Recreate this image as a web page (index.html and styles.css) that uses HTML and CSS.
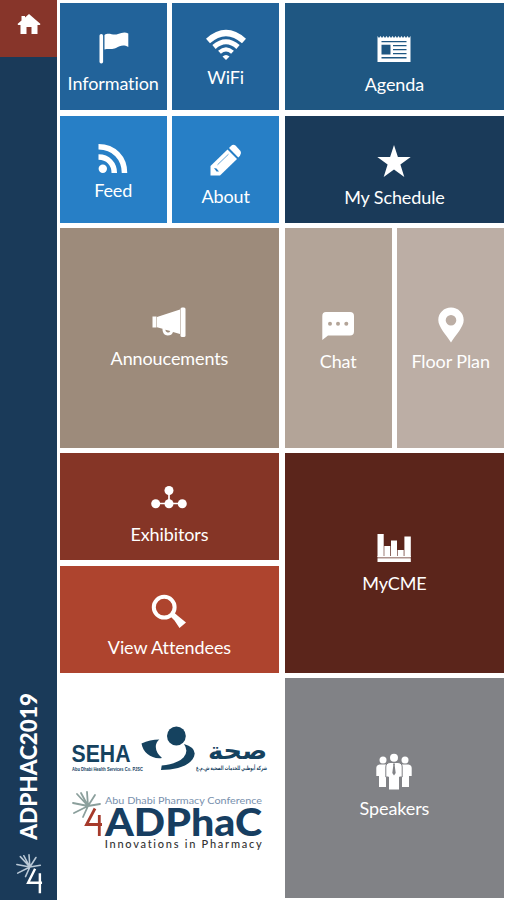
FILE: index.html
```html
<!DOCTYPE html>
<html lang="en">
<head>
    <meta charset="UTF-8">
    <meta name="viewport" content="width=device-width, initial-scale=1.0">
    <title>ADPHAC2019</title>
    <link rel="stylesheet" href="styles.css">
</head>
<body>
    <div class="app">
        <nav class="sidebar">
            <a class="home" href="#" aria-label="Home">
                <svg width="24" height="22" viewBox="0 0 24 22"><path d="M12 1 L23.5 11 L22.8 12 H20.5 V21 H14.5 V14 H9.5 V21 H3.5 V12 H1.2 L.5 11 L4.5 7.5 V3 H8 V4.5 Z"/></svg>
            </a>
            <div class="event-name">ADPHAC2019</div>
            <svg class="event-mark" width="28" height="40" viewBox="11 6 32 46">
                <path class="leaf" d="M28 21 L17 9 M28 21 L27 7 M28 21 L35 10 M28 21 L40 19 M28 21 L13 18 M28 21 L14 28 M28 21 L23 32 M28 21 L21 8"/>
                <path class="four" d="M34 23 L26 39 H42 M39.5 28 V51"/>
            </svg>
        </nav>

        <main class="tiles">
            <a class="tile information" href="#">
                <svg width="44" height="52" viewBox="0 0 44 52">
                    <rect x="8.5" y="14" width="3.6" height="29.5" rx="1.7"/>
                    <path d="M13.5 15 C18 12 22 16 27 14 C31 12.5 34 11.5 37.3 13.5 V27 C32 24 29 26 25 28 C20 30 18 28 13.5 29.5 Z"/>
                </svg>
                <span>Information</span>
            </a>
            <a class="tile wifi" href="#">
                <svg width="44" height="41" viewBox="0 0 44 41">
                    <g class="line">
                        <path d="M4 16 Q22 0 40 16" stroke-width="6"/>
                        <path d="M10 22 Q22 11.5 34 22" stroke-width="5"/>
                        <path d="M15.5 27.3 Q22 21.5 28.5 27.3" stroke-width="4.2"/>
                    </g>
                    <path d="M18.5 31.5 Q22 28.5 25.5 31.5 L22 35 Z"/>
                </svg>
                <span>WiFi</span>
            </a>
            <a class="tile agenda" href="#">
                <svg width="44" height="55" viewBox="0 0 44 55">
                    <path d="M5.5 18 L7 20 L8.5 18 L10 20 L11.5 18 L13 20 L14.5 18 L16 20 L17.5 18 L19 20 L20.5 18 L22 20 L23.5 18 L25 20 L26.5 18 L28 20 L29.5 18 L31 20 L32.5 18 L34 20 L35.5 18 L37 20 L38.5 18 V44 H5.5 Z"/>
                    <path class="cut" d="M9.5 23 H34.5 V24.3 H9.5 Z M9.5 26.8 H18.5 V36.5 H9.5 Z M21 27 H34.5 V28.3 H21 Z M21 31 H34.5 V32.3 H21 Z M21 35 H34.5 V36.3 H21 Z M9.5 39 H34.5 V40.5 H9.5 Z"/>
                </svg>
                <span>Agenda</span>
            </a>
            <a class="tile feed" href="#">
                <svg width="44" height="41" viewBox="0 0 44 41">
                    <circle cx="11.8" cy="30.7" r="4.2"/>
                    <g class="line">
                        <path d="M7.5 19 C17 19 23.3 26 23.3 35" stroke-width="5.5"/>
                        <path d="M7.5 8.7 C23 8.7 33.5 20 33.5 35" stroke-width="5.5"/>
                    </g>
                </svg>
                <span>Feed</span>
            </a>
            <a class="tile about" href="#">
                <svg width="44" height="53" viewBox="0 0 44 53">
                    <path d="M6.5 34 L23.5 17.5 L33 27 L16 43.5 H6.5 Z"/>
                    <path d="M25 16 L27 14 Q29 12 31.5 13.5 L36.5 19 Q38 21.5 36 23.7 L34.3 25.5 Z"/>
                    <path class="cut" d="M10 36 L12.5 36.5 L15 39.5 L12.5 39.5 Z"/>
                    <path class="cut-line" d="M13.5 32.8 L24.5 22.2"/>
                </svg>
                <span>About</span>
            </a>
            <a class="tile schedule" href="#">
                <svg width="44" height="55" viewBox="0 0 44 55">
                    <path d="M22 14 L25.9 26 H38.7 L28.4 33.5 L32.3 46 L22 38.5 L11.7 46 L15.6 33.5 L5.3 26 H18.1 Z"/>
                </svg>
                <span>My Schedule</span>
            </a>
            <a class="tile announcements" href="#">
                <svg width="44" height="41" viewBox="0 0 44 41">
                    <path d="M5.5 10.5 H9.5 V21.5 H5.5 Z M10 11 L33 3.5 V28 L26 26 Q25 29.5 20.5 29.5 Q16 29 15.5 24 V22.8 L10 21.3 Z"/>
                    <rect x="33.5" y="1.5" width="5" height="29.5" rx="1.5"/>
                    <path class="cut" d="M18.3 23.8 L23.3 25 Q22.5 26.8 20.5 26.5 Q18.5 26 18.3 23.8 Z"/>
                </svg>
                <span>Annoucements</span>
            </a>
            <a class="tile chat" href="#">
                <svg width="44" height="47" viewBox="0 0 44 47">
                    <path d="M10 9 H34 Q38 9 38 13 V28.5 Q38 32.5 34 32.5 H12 L6.3 37 V13 Q6.3 9 10 9 Z"/>
                    <g class="cut"><circle cx="14" cy="20.8" r="2"/><circle cx="22" cy="20.8" r="2"/><circle cx="30.3" cy="20.8" r="2"/></g>
                </svg>
                <span>Chat</span>
            </a>
            <a class="tile floor-plan" href="#">
                <svg width="44" height="47" viewBox="0 0 44 47">
                    <path fill-rule="evenodd" d="M22 4.5 C29 4.5 34.7 10 34.7 17 C34.7 24 27 31.5 22 39.5 C17 31.5 9.3 24 9.3 17 C9.3 10 15 4.5 22 4.5 Z M22 12 A5.3 5.3 0 1 0 22 22.6 A5.3 5.3 0 1 0 22 12 Z"/>
                </svg>
                <span>Floor Plan</span>
            </a>
            <a class="tile exhibitors" href="#">
                <svg width="44" height="55" viewBox="0 0 44 55">
                    <path class="line" d="M22 22 V35 M8 35.5 H36" stroke-width="1.7"/>
                    <circle cx="22" cy="22.5" r="4.5"/>
                    <circle cx="8.7" cy="35.7" r="4.5"/>
                    <circle cx="22" cy="35.7" r="4.5"/>
                    <circle cx="35.3" cy="35.7" r="4.5"/>
                </svg>
                <span>Exhibitors</span>
            </a>
            <a class="tile mycme" href="#">
                <svg width="44" height="41" viewBox="0 0 44 41">
                    <path d="M5.5 3 H11.7 V26 H5.5 Z M12.3 15 H18.3 V26 H12.3 Z M19 9.5 H25 V26 H19 Z M25.6 19 H31.7 V26 H25.6 Z M32.4 5.5 H38.8 V26 H32.4 Z M5.5 27.3 H38.8 V31 H5.5 Z"/>
                    <path d="M5.5 25 H38.8 V26.4 H5.5 Z"/>
                </svg>
                <span>MyCME</span>
            </a>
            <a class="tile attendees" href="#">
                <svg width="44" height="55" viewBox="0 0 44 55">
                    <circle class="line" cx="17.2" cy="26.2" r="10.4" stroke-width="4"/>
                    <path d="M23.5 35.5 L27 31.5 L31 35 L39 41.5 L32.5 47 L27.5 39.5 Z"/>
                </svg>
                <span>View Attendees</span>
            </a>
            <div class="logos">
                <svg width="219" height="57" viewBox="0 0 219 57">
                    <g class="seha">
                        <text class="seha-name" x="11.5" y="42" textLength="59" lengthAdjust="spacingAndGlyphs">SEHA</text>
                        <text class="seha-sub" x="12" y="50.7" textLength="71" lengthAdjust="spacingAndGlyphs">Abu Dhabi Health Services Co. PJSC</text>
                        <path d="M81.5 23.5 Q90 19.5 99.3 19.5 Q95.8 22 95.8 27 Q96 33 102 38 C92 39.5 83 33 81.5 23.5 Z"/>
                        <circle cx="116.4" cy="16" r="9.4"/>
                        <path d="M124 24 Q134.5 27 134.7 33.5 C134 44 119 50 101 50 L101.7 45.5 Q117 44 123.5 37.5 Q129 31.5 124 24 Z"/>
                        <text class="seha-arabic" x="148" y="39" textLength="59" lengthAdjust="spacingAndGlyphs">صحة</text>
                        <text class="seha-sub-arabic" x="136" y="50" textLength="71" lengthAdjust="spacingAndGlyphs">شركة أبوظبي للخدمات الصحية ش.م.ع</text>
                    </g>
                </svg>
                <svg class="conference-logo" width="219" height="72" viewBox="0 -8 219 72">
                    <path class="leaf" d="M28 11 L17 -1 M28 11 L27 -3 M28 11 L35 0 M28 11 L40 9 M28 11 L13 8 M28 11 L14 18 M28 11 L23 22 M28 11 L21 -2"/>
                    <path class="four" d="M35 13.5 L26.5 29.5 H42 M39.3 20 V41"/>
                    <text class="conference" x="45" y="8.7" textLength="157" lengthAdjust="spacingAndGlyphs">Abu Dhabi Pharmacy Conference</text>
                    <text class="adphac" x="45" y="41" textLength="157" lengthAdjust="spacingAndGlyphs">ADPhaC</text>
                    <text class="tagline" x="44.7" y="53" textLength="157">Innovations in Pharmacy</text>
                </svg>
            </div>
            <a class="tile speakers" href="#">
                <svg width="44" height="41" viewBox="0 0 44 41">
                    <circle cx="11" cy="4" r="3.5"/><circle cx="33" cy="4" r="3.5"/>
                    <path d="M7.5 8.5 H14 V31 H7 V20 H4.3 V12 Q4.3 9 7.5 8.5 Z M36.5 8.5 H30 V31 H37 V20 H39.7 V12 Q39.7 9 36.5 8.5 Z"/>
                    <path class="person" d="M18 6.5 H26 Q30.2 7 30.2 11 V21 H27.5 V34 H16.5 V21 H13.8 V11 Q13.8 7 18 6.5 Z"/>
                    <circle cx="22" cy="1.8" r="4"/>
                    <path class="cut" d="M21 7.5 H23 L22.7 9.5 L23.7 17 L22 19.5 L20.3 17 L21.3 9.5 Z"/>
                </svg>
                <span>Speakers</span>
            </a>
        </main>
    </div>
</body>
</html>
```
FILE: styles.css
```css
* {
    margin: 0;
    padding: 0;
    box-sizing: border-box;
}

body {
    font-family: Lato, 'Noto Sans', sans-serif;
    font-variant-ligatures: none;
    background-color: #fff;
    color: #fff;
}

a {
    color: inherit;
    text-decoration: none;
}

.app {
    display: flex;
    width: 507px;
    height: 900px;
    overflow: hidden;
}

/* Sidebar */
.sidebar {
    display: flex;
    flex-direction: column;
    align-items: center;
    width: 57px;
    height: 100%;
    padding-bottom: 6px;
    background-color: #1a3a59;
}

.home {
    display: flex;
    justify-content: center;
    width: 100%;
    height: 57px;
    padding-top: 13px;
    background-color: #87352a;
    fill: #fff;
}

.event-name {
    margin-top: auto;
    writing-mode: vertical-rl;
    transform: rotate(180deg);
    font-size: 22.5px;
    font-weight: 900;
    line-height: 26px;
}

.event-mark {
    margin-top: 14px;
}

.event-mark .leaf {
    stroke: #b9c8d6;
}

.event-mark .four {
    stroke: #fff;
}

/* Tiles */
.tiles {
    display: grid;
    grid-template-columns: repeat(4, 107px);
    grid-template-rows: repeat(8, 107px);
    gap: 5.5px;
    padding: 3px 0 0 2.7px;
}

.tile {
    display: flex;
    flex-direction: column;
    align-items: center;
    justify-content: center;
    background-color: var(--bg);
    font-size: 18px;
    line-height: 22px;
    letter-spacing: -0.1px;
    white-space: nowrap;
}

.tile svg {
    flex: none;
    fill: #fff;
    overflow: visible;
}

.tile .line {
    fill: none;
    stroke: #fff;
}

.tile .cut {
    fill: var(--bg);
}

.tile .cut-line {
    stroke: var(--bg);
    stroke-width: 0.7;
}

.tile .person {
    stroke: var(--bg);
    stroke-width: 1;
}

.information,
.wifi {
    --bg: #22639a;
}

.agenda {
    --bg: #1f5782;
    grid-column: span 2;
}

.feed,
.about {
    --bg: #277fc6;
}

.schedule {
    --bg: #1a3a59;
    grid-column: span 2;
}

.announcements {
    --bg: #9d8b7b;
    grid-column: span 2;
    grid-row: span 2;
}

.chat {
    --bg: #b3a498;
    grid-row: span 2;
}

.floor-plan {
    --bg: #bcaea5;
    grid-row: span 2;
}

.exhibitors {
    --bg: #853526;
    grid-column: span 2;
}

.mycme {
    --bg: #5b251b;
    grid-column: span 2;
    grid-row: span 2;
}

.attendees {
    --bg: #ae442e;
    grid-column: span 2;
}

.speakers {
    --bg: #818286;
    grid-column: span 2;
    grid-row: span 2;
}

/* Logos */
.logos {
    display: flex;
    flex-direction: column;
    grid-column: span 2;
    grid-row: span 2;
    padding-top: 42px;
}

.logos svg {
    flex: none;
    overflow: visible;
}

.conference-logo {
    margin-top: 9.5px;
}

.leaf {
    fill: none;
    stroke: #8b9f9c;
    stroke-width: 1.8;
    stroke-linecap: round;
}

.four {
    fill: none;
    stroke: #a63a2b;
    stroke-width: 2.8;
}

.seha {
    fill: #15425f;
}

.seha-name {
    font: 700 23px 'Liberation Sans', sans-serif;
}

.seha-sub {
    font: 700 5px 'Liberation Sans', sans-serif;
}

.seha-arabic {
    font: 700 24px 'DejaVu Sans', sans-serif;
}

.seha-sub-arabic {
    font: 700 6px 'DejaVu Sans', sans-serif;
}

.conference {
    font: 10px Lato, sans-serif;
    fill: #7890ad;
}

.adphac {
    font: 900 37.5px Lato, sans-serif;
    fill: #173e61;
}

.tagline {
    font: 500 11px Lato, sans-serif;
    font-variant-ligatures: none;
    fill: #333;
}
```
